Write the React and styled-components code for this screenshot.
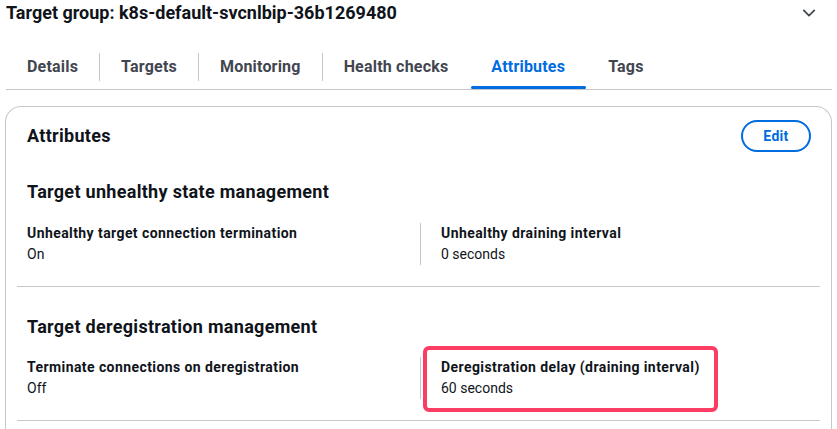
import React from "react";
import styled, { createGlobalStyle } from "styled-components";

const Global = createGlobalStyle`
  html, body { margin: 0; padding: 0; background: #ffffff; }
  body { font-family: Roboto, "Noto Sans", Arial, sans-serif; color: #0f141a; }
  * { box-sizing: border-box; }
`;

const Page = styled.div`
  width: 837px;
  height: 429px;
  overflow: hidden;
  padding: 0 5px 0 5px;
`;

const Header = styled.div`
  display: flex;
  align-items: center;
  justify-content: space-between;
  height: 25px;
  padding: 0 16px 0 1px;
`;

const Title = styled.h1`
  margin: 0;
  font-size: 18px;
  font-weight: 700;
  color: #0f141a;
`;

const Chevron = styled.svg`
  width: 14px;
  height: 14px;
  color: #424650;
`;

const TabBar = styled.div`
  display: flex;
  margin-top: 27px;
  margin-left: 1px;
  border-bottom: 1px solid #c6c6cd;
  height: 38px;
`;

const Tab = styled.div`
  position: relative;
  display: flex;
  align-items: flex-start;
  padding: 0 21px 0 21px;
  height: 100%;
  font-size: 16px;
  font-weight: 700;
  letter-spacing: 0.2px;
  color: ${(p) => (p.$active ? "#006ce0" : "#424650")};
  & + & { border-left: 1px solid transparent; }
  & + &::before {
    content: "";
    position: absolute;
    left: -1px;
    top: 1px;
    height: 28px;
    width: 1px;
    background: #c6c6cd;
  }
  span { line-height: 30px; }
  ${(p) =>
    p.$active &&
    `&::after {
      content: "";
      position: absolute;
      left: 1px;
      right: 0;
      bottom: 0px;
      height: 3px;
      border-radius: 2px;
      background: #006ce0;
    }`}
`;

const Card = styled.section`
  margin-top: 16px;
  border: 1px solid #c6c6cd;
  border-bottom: none;
  border-radius: 16px 16px 0 0;
  padding: 0 11px;
  height: 340px;
`;

const CardHeader = styled.div`
  display: flex;
  align-items: center;
  justify-content: space-between;
  padding: 12px 9px 0 10px;
  height: 45px;
`;

const CardTitle = styled.h2`
  margin: 0;
  font-size: 18px;
  font-weight: 700;
  letter-spacing: 0.3px;
  color: #0f141a;
`;

const EditButton = styled.button`
  width: 70px;
  height: 32px;
  border: 2px solid #006ce0;
  border-radius: 20px;
  background: #fff;
  color: #006ce0;
  font-family: inherit;
  font-size: 14px;
  font-weight: 700;
  letter-spacing: 0.3px;
  padding: 0;
`;

const Section = styled.div`
  padding: 0 10px;
  border-bottom: 1px solid #c6c6cd;
  padding-top: ${(p) => p.$top}px;
  padding-bottom: ${(p) => p.$bottom}px;
`;

const SectionTitle = styled.h3`
  margin: 0;
  font-size: 18px;
  font-weight: 700;
  letter-spacing: 0.3px;
  color: #0f141a;
  line-height: 24px;
`;

const Grid = styled.div`
  display: grid;
  grid-template-columns: 393px 1fr;
  margin-top: ${(p) => p.$gap}px;
`;

const Cell = styled.div`
  position: relative;
  padding-left: ${(p) => (p.$divided ? "20px" : "0")};
  border-left: ${(p) => (p.$divided ? "1px solid #c6c6cd" : "none")};
  height: 42px;
`;

const Label = styled.div`
  font-size: 14px;
  font-weight: 700;
  letter-spacing: 0.42px;
  line-height: 20px;
  color: #0f141a;
`;

const Value = styled.div`
  font-size: 14px;
  line-height: 23px;
  color: #0f141a;
`;

const Highlight = styled.div`
  position: absolute;
  left: 2px;
  top: -11px;
  width: 295px;
  height: 66px;
  border: 4px solid #fc3d63;
  border-radius: 6px;
  pointer-events: none;
`;

const tabs = ["Details", "Targets", "Monitoring", "Health checks", "Attributes", "Tags"];

export default function App() {
  return (
    <>
      <Global />
      <Page>
        <Header>
          <Title>Target group: k8s-default-svcnlbip-36b1269480</Title>
          <Chevron viewBox="0 0 16 16" fill="none">
            <path d="M2 5l6 6 6-6" stroke="currentColor" strokeWidth="2" strokeLinejoin="round" strokeLinecap="round" />
          </Chevron>
        </Header>
        <TabBar>
          {tabs.map((t) => (
            <Tab key={t} $active={t === "Attributes"}>
              <span>{t}</span>
            </Tab>
          ))}
        </TabBar>
        <Card>
          <CardHeader>
            <CardTitle>Attributes</CardTitle>
            <EditButton>Edit</EditButton>
          </CardHeader>
          <Section $top={28} $bottom={21}>
            <SectionTitle>Target unhealthy state management</SectionTitle>
            <Grid $gap={19}>
              <Cell>
                <Label>Unhealthy target connection termination</Label>
                <Value>On</Value>
              </Cell>
              <Cell $divided>
                <Label>Unhealthy draining interval</Label>
                <Value>0 seconds</Value>
              </Cell>
            </Grid>
          </Section>
          <Section $top={28} $bottom={21}>
            <SectionTitle>Target deregistration management</SectionTitle>
            <Grid $gap={18}>
              <Cell>
                <Label>Terminate connections on deregistration</Label>
                <Value>Off</Value>
              </Cell>
              <Cell $divided>
                <Label>Deregistration delay (draining interval)</Label>
                <Value>60 seconds</Value>
                <Highlight />
              </Cell>
            </Grid>
          </Section>
        </Card>
      </Page>
    </>
  );
}
